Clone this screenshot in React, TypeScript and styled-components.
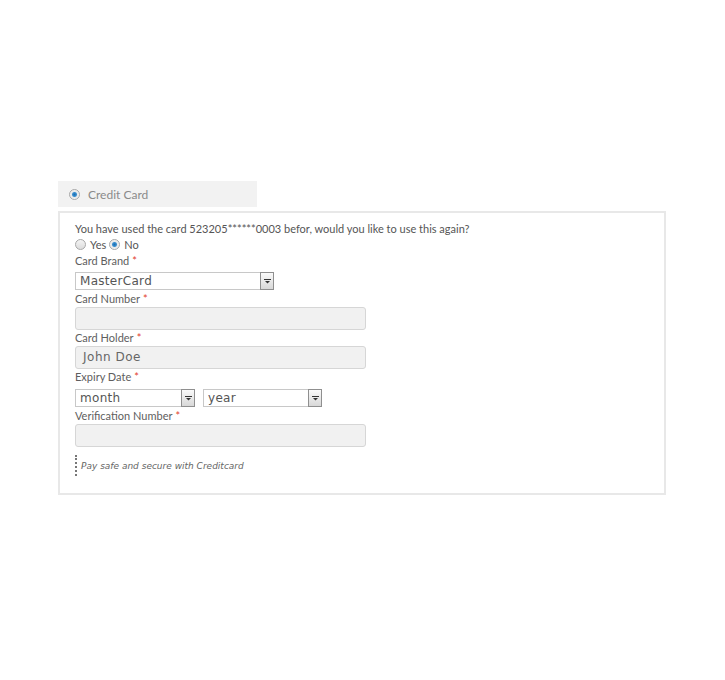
import React from "react";
import styled, { createGlobalStyle } from "styled-components";

const Global = createGlobalStyle`
  html, body { margin: 0; padding: 0; background: #fff; }
  body { font-family: Lato, "Open Sans", sans-serif; }
`;

const Page = styled.div`
  width: 725px;
  height: 680px;
  padding: 181px 0 0 58px;
  box-sizing: border-box;
`;

const Tab = styled.div`
  width: 199px;
  height: 26px;
  background: #f2f2f2;
  display: flex;
  align-items: center;
  gap: 8px;
  padding-left: 11px;
  box-sizing: border-box;
  font-size: 12px;
  color: #8a8a8a;
`;

const Panel = styled.div`
  margin-top: 4px;
  width: 608px;
  border: 2px solid #e8e8e8;
  box-sizing: border-box;
  padding: 9px 15px 17px 15px;
  display: flex;
  flex-direction: column;
`;

const Text = styled.div`
  font-size: 11px;
  line-height: 14px;
  color: #555;
`;

const RadioRow = styled.div`
  display: flex;
  align-items: center;
  height: 16px;
  padding-bottom: 2px;
  font-size: 11px;
  color: #555;
`;

const RadioLabel = styled.span`
  margin: 0 3px 0 4px;
`;

const Radio = styled.span<{ $checked?: boolean }>`
  display: inline-block;
  width: 9px;
  height: 9px;
  border-radius: 50%;
  border: 1px solid #a8a8a8;
  background: ${(p) =>
    p.$checked
      ? "radial-gradient(circle, #1d6fb0 0, #3a8fd0 2px, #e8e8e8 3px, #f6f6f6 5px)"
      : "linear-gradient(#f4f4f4, #dcdcdc)"};
  box-sizing: content-box;
`;

const Label = styled.div`
  font-size: 11px;
  line-height: 14px;
  height: 14px;
  color: #5e5e5e;
`;

const Star = styled.span`
  color: #e2412e;
  margin-left: 3px;
`;

const SelectBox = styled.div<{ $w: number }>`
  width: ${(p) => p.$w}px;
  height: 18px;
  margin: 4px 0 2px;
  border: 1px solid #c8c8c8;
  box-sizing: border-box;
  background: #fff;
  display: flex;
  align-items: stretch;
  font-family: "DejaVu Sans", Verdana, sans-serif;
  font-size: 12px;
  color: #555;
`;

const SelectText = styled.span`
  flex: 1;
  padding-left: 4px;
  line-height: 16px;
  letter-spacing: 0.3px;
`;

const SelectButton = styled.span`
  width: 12px;
  border: 1px solid #8f8f8f;
  margin: -1px -1px -1px 0;
  background: linear-gradient(#fafafa, #d8d8d8);
  display: flex;
  align-items: center;
  justify-content: center;
`;

const Row = styled.div`
  display: flex;
  gap: 8px;
  padding-top: 1px;
`;

const Input = styled.div`
  width: 291px;
  height: 23px;
  margin: 1px 0 1px;
  border: 1px solid #d6d6d6;
  border-radius: 3px;
  background: #f1f1f1;
  box-sizing: border-box;
  padding-left: 7px;
  font-family: "DejaVu Sans", Verdana, sans-serif;
  font-size: 12px;
  line-height: 21px;
  letter-spacing: 0.5px;
  color: #666;
`;

const Footer = styled.div`
  margin-top: 7px;
  height: 21px;
  border-left: 2px dotted #777;
  padding-left: 4px;
  display: flex;
  align-items: center;
  font-family: "DejaVu Sans", Verdana, sans-serif;
  font-style: italic;
  font-size: 9px;
  color: #666;
`;

const Arrow = () => (
  <svg width="7" height="5" viewBox="0 0 7 5">
    <rect x="0" y="0" width="7" height="1" fill="#333" />
    <path d="M1 2 H6 L3.5 4.5 Z" fill="#333" />
  </svg>
);

const Select = ({ value, width }: { value: string; width: number }) => (
  <SelectBox $w={width}>
    <SelectText>{value}</SelectText>
    <SelectButton>
      <Arrow />
    </SelectButton>
  </SelectBox>
);

export default function App() {
  return (
    <Page>
      <Global />
      <Tab>
        <Radio $checked />
        <span>Credit Card</span>
      </Tab>
      <Panel>
        <Text>You have used the card 523205******0003 befor, would you like to use this again?</Text>
        <RadioRow>
          <Radio />
          <RadioLabel>Yes</RadioLabel>
          <Radio $checked />
          <RadioLabel>No</RadioLabel>
        </RadioRow>
        <Label>
          Card Brand<Star>*</Star>
        </Label>
        <Select value="MasterCard" width={199} />
        <Label>
          Card Number<Star>*</Star>
        </Label>
        <Input />
        <Label>
          Card Holder<Star>*</Star>
        </Label>
        <Input>John Doe</Input>
        <Label>
          Expiry Date<Star>*</Star>
        </Label>
        <Row>
          <Select value="month" width={120} />
          <Select value="year" width={119} />
        </Row>
        <Label>
          Verification Number<Star>*</Star>
        </Label>
        <Input />
        <Footer>Pay safe and secure with Creditcard</Footer>
      </Panel>
    </Page>
  );
}
